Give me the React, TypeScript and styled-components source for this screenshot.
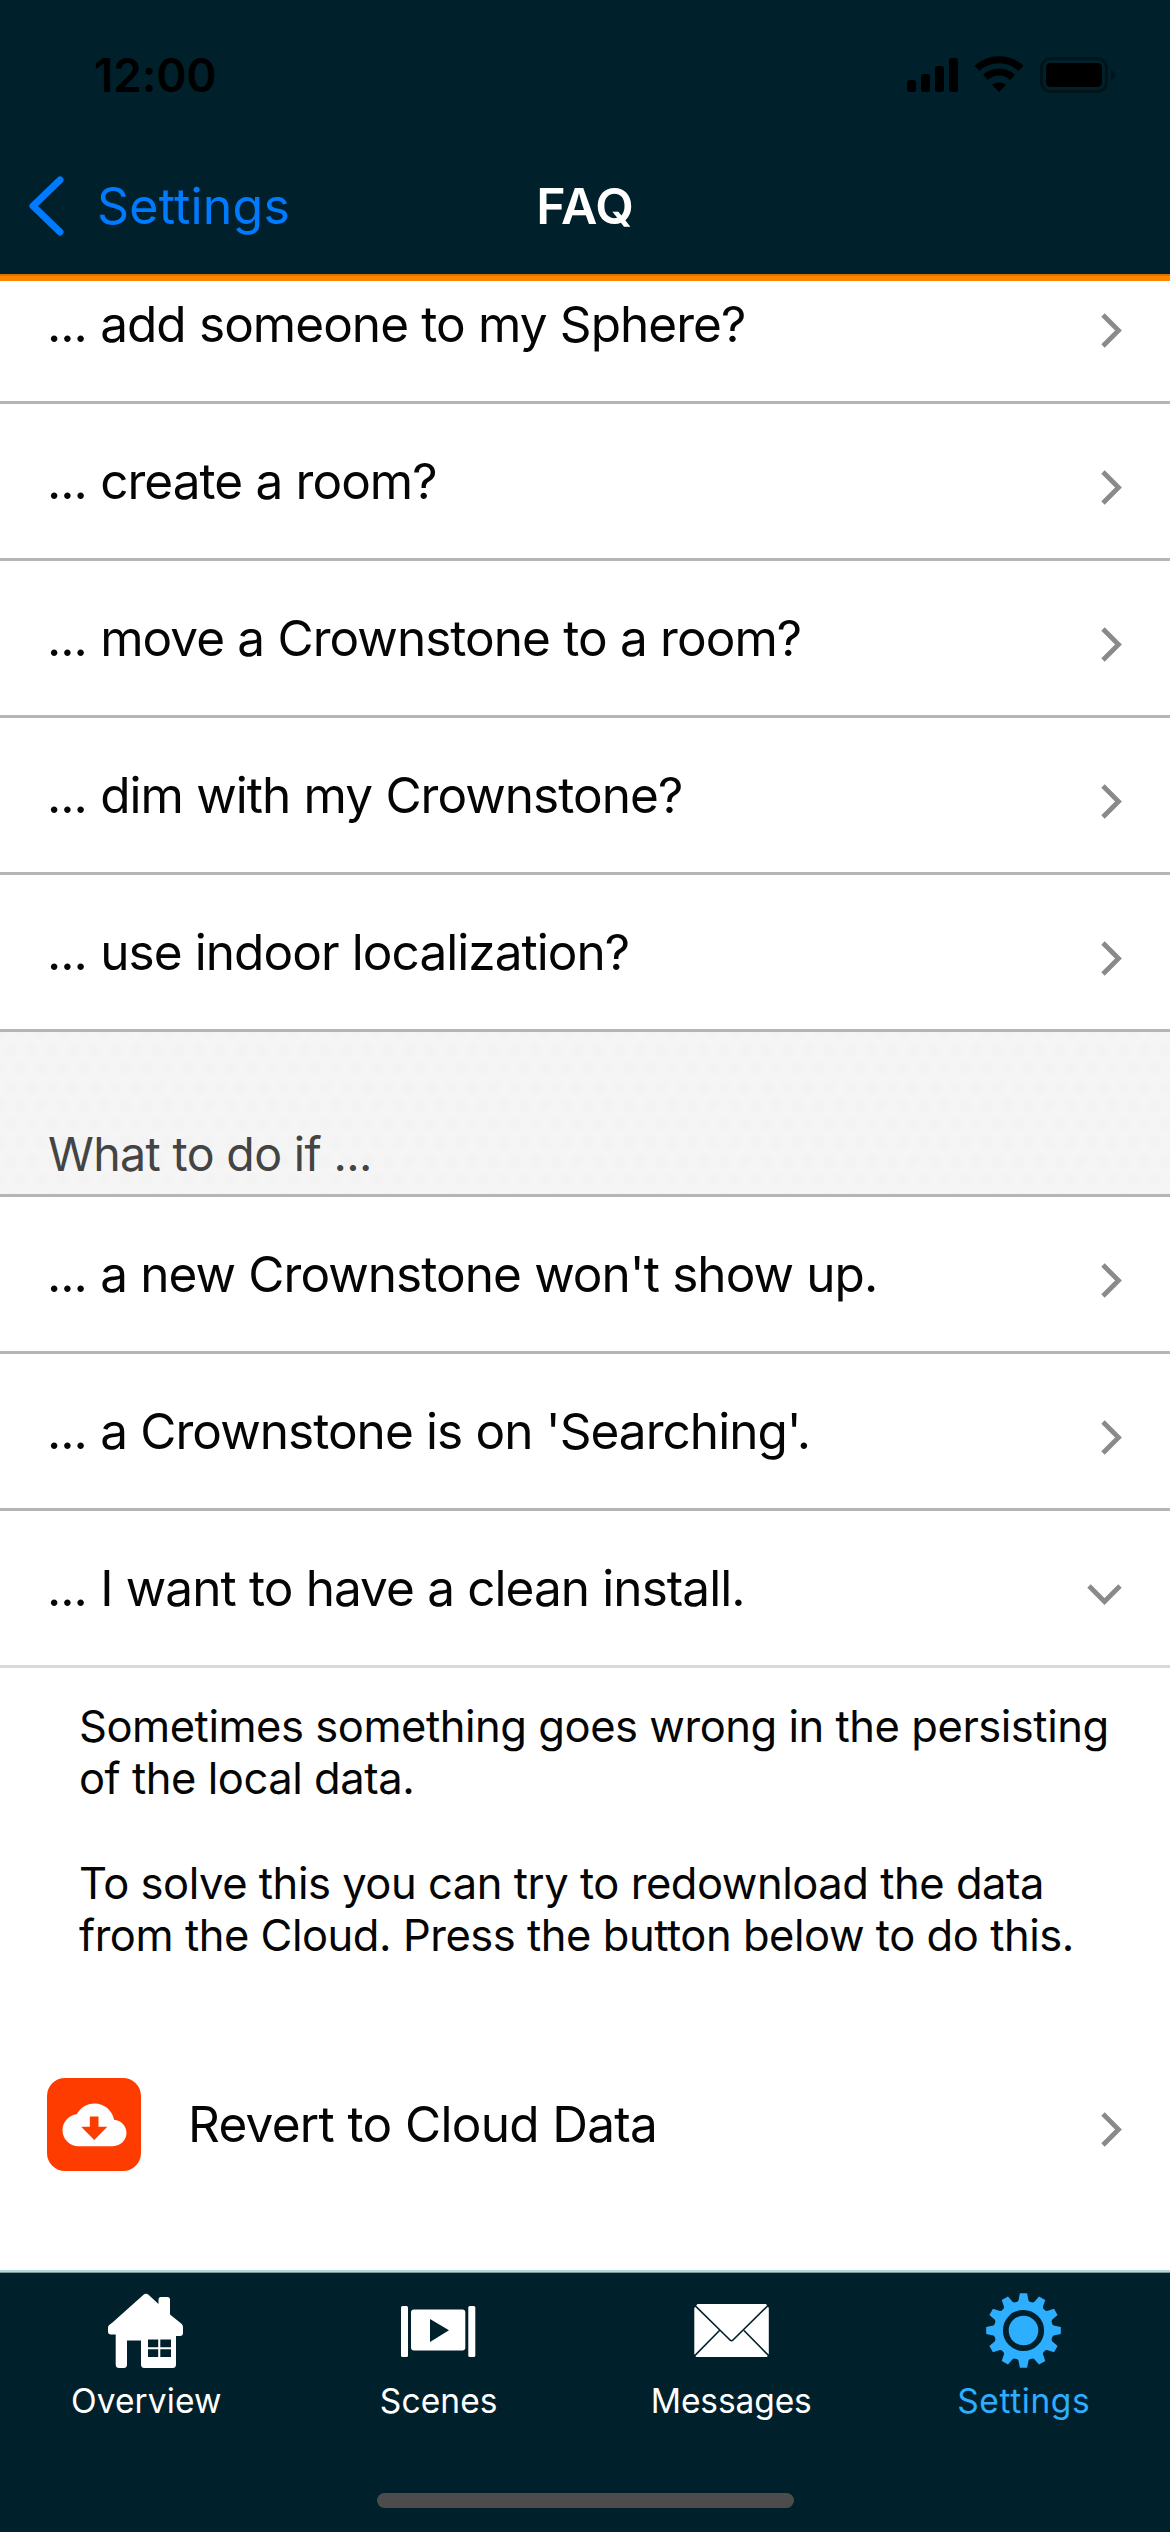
import React from "react";
import styled, { createGlobalStyle } from "styled-components";

const dark = "#00212b";
const blue = "#2eaeff";

const GlobalStyle = createGlobalStyle`
  body { margin: 0; background: #fff; }
  * { box-sizing: border-box; }
  svg { display: block; flex: none; }
`;

const Screen = styled.div`
  width: 1170px;
  height: 2532px;
  display: flex;
  flex-direction: column;
  overflow: hidden;
  background: #fff;
  color: #050505;
  font-family: Inter, "Liberation Sans", sans-serif;
`;

const Header = styled.header`
  flex: none;
  height: 281px;
  background: ${dark};
  border-bottom: 5px solid #ff8400;
  box-shadow: inset 0 -2px #d87200;
  display: flex;
  flex-direction: column;
`;

const StatusBar = styled.div`
  height: 141px;
  padding: 8px 55px 0 94px;
  display: flex;
  align-items: center;
  justify-content: space-between;
  color: #000;
`;

const Clock = styled.span`
  font-size: 46px;
  font-weight: 600;
  line-height: 56px;
  letter-spacing: -0.2px;
`;

const NavBar = styled.div`
  height: 133px;
  display: grid;
  grid-template-columns: 1fr auto 1fr;
  align-items: center;
  padding: 0 28px 4px;
`;

const BackButton = styled.button`
  display: flex;
  align-items: center;
  gap: 32px;
  padding: 0;
  border: 0;
  background: none;
  color: #007aff;
  font: 400 50px/60px Inter, "Liberation Sans", sans-serif;
  letter-spacing: 0.2px;
`;

const NavTitle = styled.h1`
  margin: 0;
  color: #fff;
  font-size: 50px;
  line-height: 60px;
  font-weight: 600;
  letter-spacing: -0.1px;
`;

const Viewport = styled.main`
  flex: 1;
  min-height: 0;
  overflow: hidden;
`;

const List = styled.div`
  margin-top: -34px;
  display: flex;
  flex-direction: column;
`;

const Row = styled.div<{ $open?: boolean }>`
  height: 157px;
  display: flex;
  align-items: center;
  justify-content: space-between;
  padding: 0 48px 0 47px;
  border-bottom: 3px solid ${(p) => (p.$open ? "#d9d9d9" : "#b5b5b5")};
`;

const RowLabel = styled.span`
  font-size: 49.5px;
  line-height: 60px;
  letter-spacing: -0.96px;
  word-spacing: 0.3px;
  white-space: nowrap;
`;

const ChevronSlot = styled.span`
  padding-top: 12px;
`;

const SectionHeader = styled.div`
  height: 165px;
  display: flex;
  align-items: flex-end;
  padding: 0 48px 12px;
  border-bottom: 3px solid #b5b5b5;
  background-color: #f5f5f5;
  background-image: radial-gradient(circle, #f3f3f3 4px, transparent 8px),
    radial-gradient(circle, #f3f3f3 4px, transparent 8px);
  background-size: 21px 37px;
  background-position: 0 0, 10px 18px;
  color: #444;
  font-size: 46.5px;
  line-height: 56px;
  letter-spacing: -0.64px;
`;

const Answer = styled.div`
  height: 333px;
  padding: 32px 0 0 79px;
  font-size: 43.5px;
  line-height: 52.3px;
  letter-spacing: -0.46px;
  white-space: pre-line;
`;

const ActionRow = styled.div`
  height: 245px;
  display: flex;
  align-items: center;
  padding: 0 48px 0 47px;
`;

const IconTile = styled.div`
  flex: none;
  width: 94px;
  height: 93px;
  margin-top: 2px;
  border-radius: 18px;
  background: #ff3c00;
  display: grid;
  place-items: center;
`;

const ActionLabel = styled(RowLabel)`
  flex: 1;
  padding-left: 47px;
  letter-spacing: -0.72px;
`;

const TabBar = styled.nav`
  flex: none;
  height: 262px;
  border-top: 2px solid #b4d8db;
  box-shadow: inset 0 1px #7d9799;
  background: ${dark};
  display: flex;
  flex-direction: column;
  align-items: center;
`;

const Tabs = styled.div`
  width: 100%;
  height: 221px;
  display: grid;
  grid-template-columns: repeat(4, 1fr);
`;

const Tab = styled.div<{ $active?: boolean }>`
  display: flex;
  flex-direction: column;
  align-items: center;
  padding-top: 21px;
  gap: 12px;
  color: ${(p) => (p.$active ? blue : "#fff")};
`;

const TabLabel = styled.span<{ $tracking: number }>`
  font-size: 33.5px;
  line-height: 42px;
  letter-spacing: ${(p) => p.$tracking}px;
`;

const HomeIndicator = styled.div`
  width: 417px;
  height: 15px;
  border-radius: 8px;
  background: #4c4c4c;
`;

const Chevron = ({ open }: { open?: boolean }) => (
  <ChevronSlot>
    {open ? (
      <svg width="35" height="21" viewBox="0 0 35 21">
        <path d="M2 2 L17.5 17.5 L33 2" fill="none" stroke="#8a8a8a" strokeWidth="4.8" />
      </svg>
    ) : (
      <svg width="21" height="35" viewBox="0 0 21 35">
        <path d="M2 2 L17.5 17.5 L2 33" fill="none" stroke="#8a8a8a" strokeWidth="4.8" />
      </svg>
    )}
  </ChevronSlot>
);

const BackChevron = () => (
  <svg width="37" height="60" viewBox="0 0 37 60">
    <path d="M32 4 L5 30 L32 56" fill="none" stroke="#007aff" strokeWidth="7" strokeLinecap="round" strokeLinejoin="round" />
  </svg>
);

const StatusIcons = () => (
  <svg width="208" height="38" viewBox="907 55 208 38">
    <rect x="907" y="79" width="9" height="12" rx="2.5" />
    <rect x="921" y="73" width="9" height="18" rx="2.5" />
    <rect x="935" y="65" width="9" height="26" rx="2.5" />
    <rect x="949" y="57" width="9" height="34" rx="2.5" />
    <path d="M999 91 L992 83.8 A10.500 10.500 0 0 1 1006 83.8 Z" />
    <path d="M985.4 76.400 A20 20 0 0 1 1012.6 76.400" fill="none" stroke="#000" strokeWidth="7" />
    <path d="M977 67.400 A32.300 32.300 0 0 1 1021 67.400" fill="none" stroke="#000" strokeWidth="7.200" />
    <rect x="1041.5" y="57.5" width="65" height="33" rx="9" fill="none" stroke="#001419" strokeWidth="3" />
    <rect x="1046" y="62" width="56" height="24" rx="4.5" />
    <path d="M1111 69 Q1115 70.5 1115 74 Q1115 77.5 1111 79 Z" fill="#001419" />
  </svg>
);

const CloudDownload = () => (
  <svg width="65" height="44" viewBox="-0.2 3.8 24.4 16.5">
    <path
      d="M19.35 10.04C18.67 6.59 15.64 4 12 4 9.11 4 6.6 5.64 5.35 8.04 2.34 8.36 0 10.91 0 14c0 3.31 2.69 6 6 6h13c2.76 0 5-2.24 5-5 0-2.64-2.05-4.78-4.65-4.96z"
      fill="#fff"
    />
    <path d="M10.250 8.900 H13.500 V12.700 H16.800 L11.900 17.700 L7 12.700 H10.250 Z" fill="#ff3c00" />
  </svg>
);

const HouseIcon = () => (
  <svg width="76" height="75" viewBox="108 43 76 75">
    <path
      fill="#fff"
      fillRule="evenodd"
      d="M143.500 44.800 Q146 42.600 148.500 44.800 L158.500 54 V49.500 Q158.500 47 161 47 H167.500 Q170 47 170 49.500 V64.500 L181.500 73.800 Q183 75 183 77 V83 Q183 86 180 86 H176 V114.500 Q176 118 172.500 118 H144.500 Q141 118 141 114.500 V90.500 H127 V114.500 Q127 118 123.500 118 H119.200 Q115.700 118 115.700 114.500 V84.500 H111 Q108 84.500 108 81.500 V77.500 Q108 76 109.200 75 L112.500 72.500 Z M148 89.500 V97.300 H158.200 V89.500 Z M160.300 89.500 V97.300 H171 V89.500 Z M148 99.300 V107 H158.200 V99.300 Z M160.300 99.300 V107 H171 V99.300 Z"
    />
  </svg>
);

const ScenesIcon = () => (
  <svg width="75" height="75" viewBox="402 43 75 75">
    <rect x="402" y="56" width="7" height="51" rx="1.500" fill="#fff" />
    <rect x="469.300" y="56" width="7" height="51" rx="1.500" fill="#fff" />
    <rect x="412" y="59.500" width="54.300" height="41" rx="3" fill="#fff" />
    <path d="M431 69 L450 80.300 L431 92 Z" fill={dark} />
  </svg>
);

const MessagesIcon = () => (
  <svg width="75" height="75" viewBox="692.500 43 75 75">
    <path d="M696 54 H764.500 L767.300 58 V104 L765.500 107 H694.500 L692.800 104 V58 Z" fill="#fff" />
    <path d="M693 55 L728.500 90 Q730 91.500 731.500 90 L767 55 M693 106 L718 80.500 M767.500 106 L742.500 80.500" fill="none" stroke={dark} strokeWidth="1.600" />
  </svg>
);

const gearPath = (() => {
  const points: string[] = [];
  const add = (r: number, deg: number) => {
    const a = (deg * Math.PI) / 180;
    points.push(`${(37.5 + r * Math.sin(a)).toFixed(2)} ${(37.5 - r * Math.cos(a)).toFixed(2)}`);
  };
  for (let i = 0; i < 12; i++) {
    const c = i * 30;
    add(29.5, c - 12);
    add(30.5, c - 9.5);
    add(37.5, c - 5.5);
    add(37.5, c + 5.5);
    add(30.5, c + 9.5);
    add(29.5, c + 12);
  }
  return `M${points.join("L")}Z`;
})();

const SettingsIcon = () => (
  <svg width="75" height="75" viewBox="0 0 75 75">
    <path d={gearPath} fill={blue} />
    <circle cx="37.500" cy="37.500" r="17.700" fill="none" stroke={dark} strokeWidth="5.800" />
  </svg>
);

const howTo = [
  "... add someone to my Sphere?",
  "... create a room?",
  "... move a Crownstone to a room?",
  "... dim with my Crownstone?",
  "... use indoor localization?",
];

const whatIf = [
  { label: "... a new Crownstone won't show up." },
  { label: "... a Crownstone is on 'Searching'." },
  { label: "... I want to have a clean install.", open: true },
];

const tabs = [
  { label: "Overview", icon: <HouseIcon />, tracking: 0.1 },
  { label: "Scenes", icon: <ScenesIcon />, tracking: 0.1 },
  { label: "Messages", icon: <MessagesIcon />, tracking: -0.1 },
  { label: "Settings", icon: <SettingsIcon />, tracking: 0.6, active: true },
];

export default function App() {
  return (
    <Screen>
      <GlobalStyle />
      <Header>
        <StatusBar>
          <Clock>12:00</Clock>
          <StatusIcons />
        </StatusBar>
        <NavBar>
          <BackButton>
            <BackChevron />
            Settings
          </BackButton>
          <NavTitle>FAQ</NavTitle>
        </NavBar>
      </Header>
      <Viewport>
        <List>
          {howTo.map((label) => (
            <Row key={label}>
              <RowLabel>{label}</RowLabel>
              <Chevron />
            </Row>
          ))}
          <SectionHeader>What to do if ...</SectionHeader>
          {whatIf.map(({ label, open }) => (
            <Row key={label} $open={open}>
              <RowLabel>{label}</RowLabel>
              <Chevron open={open} />
            </Row>
          ))}
          <Answer>
            {"Sometimes something goes wrong in the persisting\nof the local data.\n\nTo solve this you can try to redownload the data\nfrom the Cloud. Press the button below to do this."}
          </Answer>
          <ActionRow>
            <IconTile>
              <CloudDownload />
            </IconTile>
            <ActionLabel>Revert to Cloud Data</ActionLabel>
            <Chevron />
          </ActionRow>
        </List>
      </Viewport>
      <TabBar>
        <Tabs>
          {tabs.map(({ label, icon, tracking, active }) => (
            <Tab key={label} $active={active}>
              {icon}
              <TabLabel $tracking={tracking}>{label}</TabLabel>
            </Tab>
          ))}
        </Tabs>
        <HomeIndicator />
      </TabBar>
    </Screen>
  );
}
